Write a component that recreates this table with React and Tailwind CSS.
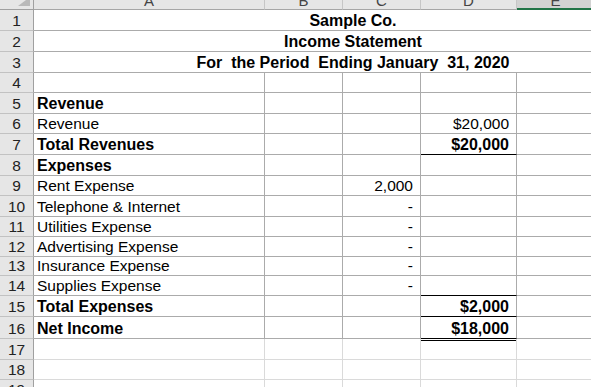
const font = { fontFamily: '"Liberation Sans", Arial, sans-serif' };

const heights = {
  19: "h-[19px]",
  20: "h-[20px]",
  21: "h-[21px]",
  22: "h-[22px]",
};

const rows = [
  { n: 1, h: 21, title: "Sample Co." },
  { n: 2, h: 21, title: "Income Statement" },
  { n: 3, h: 21, title: "For  the Period  Ending January  31, 2020" },
  { n: 4, h: 20 },
  { n: 5, h: 21, a: "Revenue", bold: true },
  { n: 6, h: 20, a: "Revenue", d: "$20,000" },
  { n: 7, h: 21, a: "Total Revenues", bold: true, d: "$20,000", line: "single" },
  { n: 8, h: 21, a: "Expenses", bold: true },
  { n: 9, h: 20, a: "Rent Expense", c: "2,000" },
  { n: 10, h: 21, a: "Telephone & Internet", c: "-" },
  { n: 11, h: 20, a: "Utilities Expense", c: "-" },
  { n: 12, h: 20, a: "Advertising Expense", c: "-" },
  { n: 13, h: 19, a: "Insurance Expense", c: "-" },
  { n: 14, h: 20, a: "Supplies Expense", c: "-", line: "single" },
  { n: 15, h: 21, a: "Total Expenses", bold: true, d: "$2,000", line: "single" },
  { n: 16, h: 22, a: "Net Income", bold: true, d: "$18,000", line: "double" },
  { n: 17, h: 21, light: true },
  { n: 18, h: 20, light: true },
  { n: 19, h: 20, light: true },
];

const ColHeader = ({ label, width, active }) => (
  <div
    className={`${width} h-[10px] overflow-hidden flex justify-center border-r border-[#c6c6c6] ${
      active ? "bg-[#d2d2d2] border-b-2 border-b-[#217346]" : "bg-[#e6e6e6] border-b border-b-[#a6a6a6]"
    }`}
  >
    <span className="-mt-[7px] text-[15px] leading-[15px] text-[#444]">{label}</span>
  </div>
);

const Row = ({ row }) => {
  const grid = row.light ? "border-[#dadada]" : "border-[#ababab]";
  const cell = `flex items-end pb-[1px] leading-[17px] border-b border-r ${grid}`;
  const weight = row.bold ? "font-bold text-[16px]" : "";

  let dBorder = "";
  if (row.line === "single") dBorder = "border-b-black";
  if (row.line === "double") dBorder = "border-b-black shadow-[0_1px_0_0_#fff,0_2px_0_0_#000]";

  return (
    <div className={`flex ${heights[row.h]}`}>
      <div className="w-[34px] shrink-0 flex items-end justify-center pb-[1px] leading-[17px] bg-[#e6e6e6] border-r border-r-[#a0a0a0] border-b border-b-[#c2c2c2] text-[#222]">
        {row.n}
      </div>
      {row.title ? (
        <div className={`w-[638px] shrink-0 ${cell} justify-center border-r-0 font-bold text-[16px] whitespace-pre`}>
          {row.title}
        </div>
      ) : (
        <>
          <div className={`w-[231px] shrink-0 ${cell} pl-[3px] ${weight}`}>{row.a}</div>
          <div className={`w-[78px] shrink-0 ${cell}`}></div>
          <div className={`w-[78px] shrink-0 ${cell} justify-end pr-[7px]`}>{row.c}</div>
          <div className={`w-[96px] shrink-0 ${cell} justify-end pr-[7px] ${weight} ${dBorder}`}>{row.d}</div>
          <div className={`w-[78px] shrink-0 ${cell}`}></div>
          <div className={`w-[77px] shrink-0 ${cell}`}></div>
        </>
      )}
    </div>
  );
};

export default function App() {
  return (
    <div className="w-[591px] h-[387px] overflow-hidden bg-white text-[15.5px] text-black" style={font}>
      <div className="w-[672px]">
        <div className="flex">
          <div className="w-[34px] h-[10px] shrink-0 bg-[#e6e6e6] border-r border-b border-[#a0a0a0]">
            <svg width="33" height="9" viewBox="0 0 33 9">
              <polygon points="30,-3 30,6 18,6" fill="#b9b9b9" />
            </svg>
          </div>
          <ColHeader label="A" width="w-[231px] shrink-0" />
          <ColHeader label="B" width="w-[78px] shrink-0" />
          <ColHeader label="C" width="w-[78px] shrink-0" />
          <ColHeader label="D" width="w-[96px] shrink-0" />
          <ColHeader label="E" width="w-[78px] shrink-0" active />
          <ColHeader label="F" width="w-[77px] shrink-0" />
        </div>
        {rows.map((row) => (
          <Row key={row.n} row={row} />
        ))}
      </div>
    </div>
  );
}
